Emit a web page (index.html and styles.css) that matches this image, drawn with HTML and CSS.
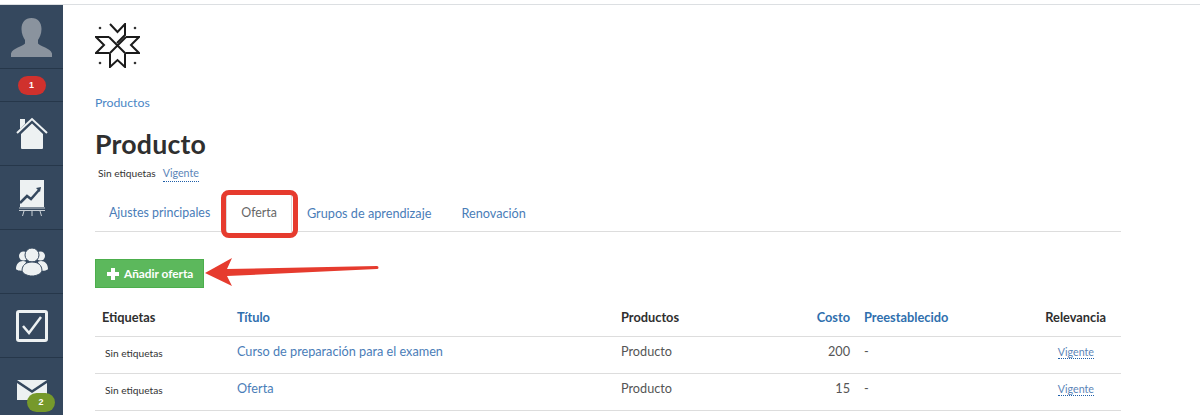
FILE: index.html
```html
<!DOCTYPE html>
<html lang="es">
<head>
<meta charset="utf-8">
<title>Producto</title>
<link rel="stylesheet" href="styles.css">
</head>
<body>
<div class="app">
  <nav class="sidebar">
    <div class="nav-item avatar">
      <svg width="41" height="39" viewBox="0 0 41 39"><path fill="#8a939e" d="M20.500 0c6.500 0 10 4.500 10 11 0 5-2 8.500-3.500 11v3.500c2 3 12.500 4.500 14 10V39H0v-3.500c1.500-5.500 12-7 14-10V22c-1.500-2.500-3.500-6-3.500-11 0-6.500 3.500-11 10-11z"/></svg>
    </div>
    <div class="nav-item badge-row"><span class="badge red">1</span></div>
    <div class="nav-item home">
      <svg width="32" height="32" viewBox="0 0 32 32"><path fill="#edf1f2" d="M4 2h5v5l-5 5zM5 17 16 6.500 27 17v14a1 1 0 0 1-1 1H6a1 1 0 0 1-1-1z"/><path fill="none" stroke="#edf1f2" stroke-width="2" d="M1 16 16 2l15 14"/></svg>
    </div>
    <div class="nav-item">
      <svg width="26" height="36" viewBox="0 0 26 36"><rect x="1" y="0" width="24" height="27" fill="#edf1f2"/><path d="M1 23l7-7 4 3 8-9" fill="none" stroke="#35485e" stroke-width="2.500"/><path d="M22 7l-5 1 4 4z" fill="#35485e"/><path d="M0 28h26M0 30.500h26M5 31l-1.500 5M13 31v5M21 31l1.500 5" stroke="#c9d0d6" stroke-width="1" fill="none"/></svg>
    </div>
    <div class="nav-item">
      <svg width="32" height="28" viewBox="0 0 32 28"><circle cx="7.500" cy="8" r="4.500" fill="#edf1f2"/><circle cx="24.500" cy="8" r="4.500" fill="#edf1f2"/><path fill="#edf1f2" d="M0 21c0-5 3-8 7-8 2 0 3 1 3 1l-2 9c-4 0-8-1-8-2zM32 21c0-5-3-8-7-8-2 0-3 1-3 1l2 9c4 0 8-1 8-2z"/><circle cx="16" cy="7" r="7" fill="#edf1f2" stroke="#35485e"/><path fill="#edf1f2" stroke="#35485e" d="M6 23c0-6 4-9 10-9s10 3 10 9c-1 3-6 5-10 5s-9-2-10-5z"/></svg>
    </div>
    <div class="nav-item">
      <svg width="32" height="32" viewBox="0 0 32 32"><rect x="1.500" y="1.500" width="29" height="29" rx="1.500" fill="none" stroke="#edf1f2" stroke-width="3"/><path d="M7 16l6 7L25 7" fill="none" stroke="#edf1f2" stroke-width="2.500"/></svg>
    </div>
    <div class="nav-item mail">
      <svg width="30" height="20" viewBox="0 0 30 20"><path fill="#edf1f2" d="M0 0h30L15 10zM0 3v17h30V3L15 13z"/></svg>
      <span class="badge green">2</span>
    </div>
  </nav>
  <main class="content">
    <svg class="logo" width="45" height="45" viewBox="0 0 45 45">
      <g fill="none" stroke="#1b1b1b" stroke-width="2">
        <path d="M15 1l7.500 8L30 1v11l-8 8"/>
        <path d="M15 31v13l7.500-7 7.500 7V31"/>
        <path d="M14 14H1l8 8-8 8h13"/>
        <path d="M31 14h13l-8 8 8 8H31"/>
        <path d="M14 14l17 17M31 14 14 31"/>
      </g>
      <g fill="#333"><circle cx="5" cy="5" r="1.300"/><circle cx="40" cy="5" r="1.300"/><circle cx="5" cy="40" r="1.300"/><circle cx="40" cy="40" r="1.300"/></g>
    </svg>
    <a class="crumb">Productos</a>
    <h1 class="title">Producto</h1>
    <div class="meta"><span class="tags">Sin etiquetas</span><a class="dotted">Vigente</a></div>
    <div class="tabs">
      <a class="tab first">Ajustes principales</a>
      <a class="tab active">Oferta</a>
      <a class="tab wide">Grupos de aprendizaje</a>
      <a class="tab wide">Renovación</a>
    </div>
    <button class="add"><span class="plus"></span>Añadir oferta</button>
    <table class="grid">
      <colgroup><col class="c1"><col class="c2"><col class="c3"><col class="c4"><col class="c5"><col class="c6"></colgroup>
      <thead>
        <tr><th>Etiquetas</th><th class="link">Título</th><th>Productos</th><th class="link right">Costo</th><th class="link">Preestablecido</th><th class="right">Relevancia</th></tr>
      </thead>
      <tbody>
        <tr><td class="small">Sin etiquetas</td><td><a>Curso de preparación para el examen</a></td><td>Producto</td><td class="right">200</td><td>-</td><td class="state"><a class="dotted">Vigente</a></td></tr>
        <tr><td class="small">Sin etiquetas</td><td><a>Oferta</a></td><td>Producto</td><td class="right">15</td><td>-</td><td class="state"><a class="dotted">Vigente</a></td></tr>
      </tbody>
    </table>
  </main>
</div>
<div class="callout"></div>
<svg class="arrow" width="190" height="40" viewBox="0 0 190 40"><path fill="#e63b2e" d="M1 18 28 3l-5 11 150-3a1.500 1.500 0 0 1 0 3L23 21l5 10z"/></svg>
</body>
</html>
```
FILE: styles.css
```css
* { box-sizing: border-box; }
html, body { margin: 0; height: 415px; overflow: hidden; background: #fff; }
body { font-family: Lato, "Liberation Sans", sans-serif; color: #333; position: relative; padding-top: 4px; }
.app { display: flex; height: 411px; border-top: 1px solid #dcdfe2; overflow: hidden; }
.sidebar { width: 63px; flex: none; background: #35485e; }
.nav-item { height: 64px; border-bottom: 1px solid #26374a; display: flex; align-items: center; justify-content: center; position: relative; }
.avatar { height: 64px; align-items: flex-end; padding-bottom: 11px; }
.badge-row { height: 33px; }
.home { padding-bottom: 2px; }
.badge { display: block; width: 28px; height: 19px; border-radius: 10px; color: #fff; font: 700 9px/19px "Liberation Sans", sans-serif; text-align: center; }
.red { background: #d0312d; }
.green { background: #76992b; position: absolute; left: 27px; top: 35px; }
.mail { padding-bottom: 2px; border-bottom: 0; }
.mail svg { margin-top: 2px; }
.content { width: 1026px; margin-left: 32px; flex: none; }
.logo { display: block; margin-top: 18px; }
.crumb { display: block; margin-top: 27px; font-size: 12.300px; line-height: 16px; color: #4a86c5; }
.title { margin: 18px 0 0; font-size: 26.700px; line-height: 30px; font-weight: 700; color: #2f2f2f; letter-spacing: .2px; }
.meta { display: flex; gap: 7px; padding-left: 3px; margin-top: 7px; font-size: 10.200px; line-height: 14px; height: 16px; }
.tags { color: #333; }
.dotted { color: #5c85b8; border-bottom: 1px dotted #1f5fa8; font-size: 10.700px; }
.tabs { display: flex; gap: 1px; height: 39px; margin-top: 11px; border-bottom: 1px solid #ddd; font-size: 12.400px; }
.tab { padding: 0 15px; line-height: 40px; color: #4a7db8; height: 39px; }
.tab.first { padding-left: 14px; }
.tab.wide { font-size: 12.700px; padding: 0 15px 0 14px; }
.tab.active { color: #666; background: #fff; border: 1px solid #ddd; border-bottom: 0; border-radius: 3px 3px 0 0; padding: 0 14px; line-height: 38px; }
.add { display: flex; align-items: center; gap: 5px; width: 109px; height: 29px; margin-top: 27px; padding: 0 0 0 11px; border: 1px solid #4cae4c; background: #5cb85c; color: #fff; font: 700 11.800px Lato, sans-serif; }
.plus { width: 12px; height: 12px; background: linear-gradient(#fff,#fff) center/12px 4px no-repeat, linear-gradient(#fff,#fff) center/4px 12px no-repeat; }
.grid { width: 1026px; margin-top: 11px; border-collapse: collapse; table-layout: fixed; font-size: 12.700px; }
.c1 { width: 135px; } .c2 { width: 384px; } .c3 { width: 155px; } .c4 { width: 81px; } .c5 { width: 171px; } .c6 { width: 100px; }
th, td { height: 37px; padding: 0 7px; text-align: left; border-bottom: 1px solid #ddd; vertical-align: middle; }
th { font-weight: 700; font-size: 12.800px; color: #2f2f2f; }
th:nth-child(n+5), td:nth-child(n+5) { padding-left: 14px; }
th.right, td.right { text-align: right; padding-right: 0; padding-left: 0; }
th:last-child { padding-right: 15px; }
th.link { color: #2f6fae; }
td { color: #555; padding-bottom: 8px; }
td a { color: #4a7db8; }
td.small { font-size: 10.200px; color: #333; padding-left: 10px; padding-bottom: 4px; }
td.state { padding: 0 27px 7px 0; text-align: right; }
.callout { position: absolute; left: 221px; top: 190px; width: 77px; height: 48px; border: 5px solid #e63b2e; border-radius: 8px; }
.arrow { position: absolute; left: 204px; top: 255px; }
```
